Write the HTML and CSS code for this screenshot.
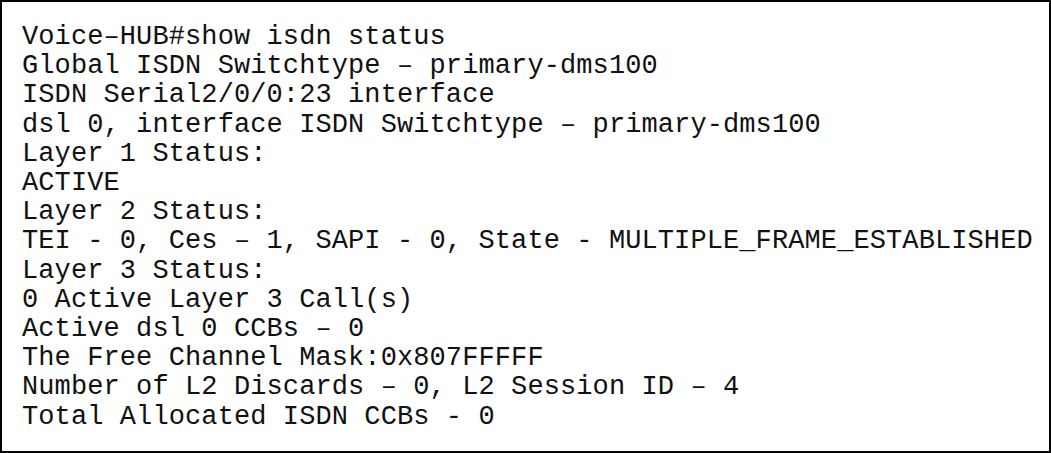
FILE: index.html
```html
<!DOCTYPE html>
<html>
<head>
<meta charset="utf-8">
<link rel="stylesheet" href="styles.css">
</head>
<body>
<div class="frame">
<pre class="console">Voice–HUB#show isdn status
Global ISDN Switchtype – primary-dms100
ISDN Serial2/0/0:23 interface
dsl 0, interface ISDN Switchtype – primary-dms100
Layer 1 Status:
ACTIVE
Layer 2 Status:
TEI - 0, Ces – 1, SAPI - 0, State - MULTIPLE_FRAME_ESTABLISHED
Layer 3 Status:
0 Active Layer 3 Call(s)
Active dsl 0 CCBs – 0
The Free Channel Mask:0x807FFFFF
Number of L2 Discards – 0, L2 Session ID – 4
Total Allocated ISDN CCBs - 0</pre>
</div>
</body>
</html>
```
FILE: styles.css
```css
html, body {
  margin: 0;
  padding: 0;
  background: #ffffff;
}
.frame {
  box-sizing: border-box;
  width: 1051px;
  height: 453px;
  border: 2px solid #000000;
  padding: 21px 0 0 20px;
}
.console {
  margin: 0;
  font-family: "Liberation Mono", "Courier New", monospace;
  font-size: 27px;
  line-height: 29.2px;
  letter-spacing: 0.1px;
  color: #111111;
}
```
